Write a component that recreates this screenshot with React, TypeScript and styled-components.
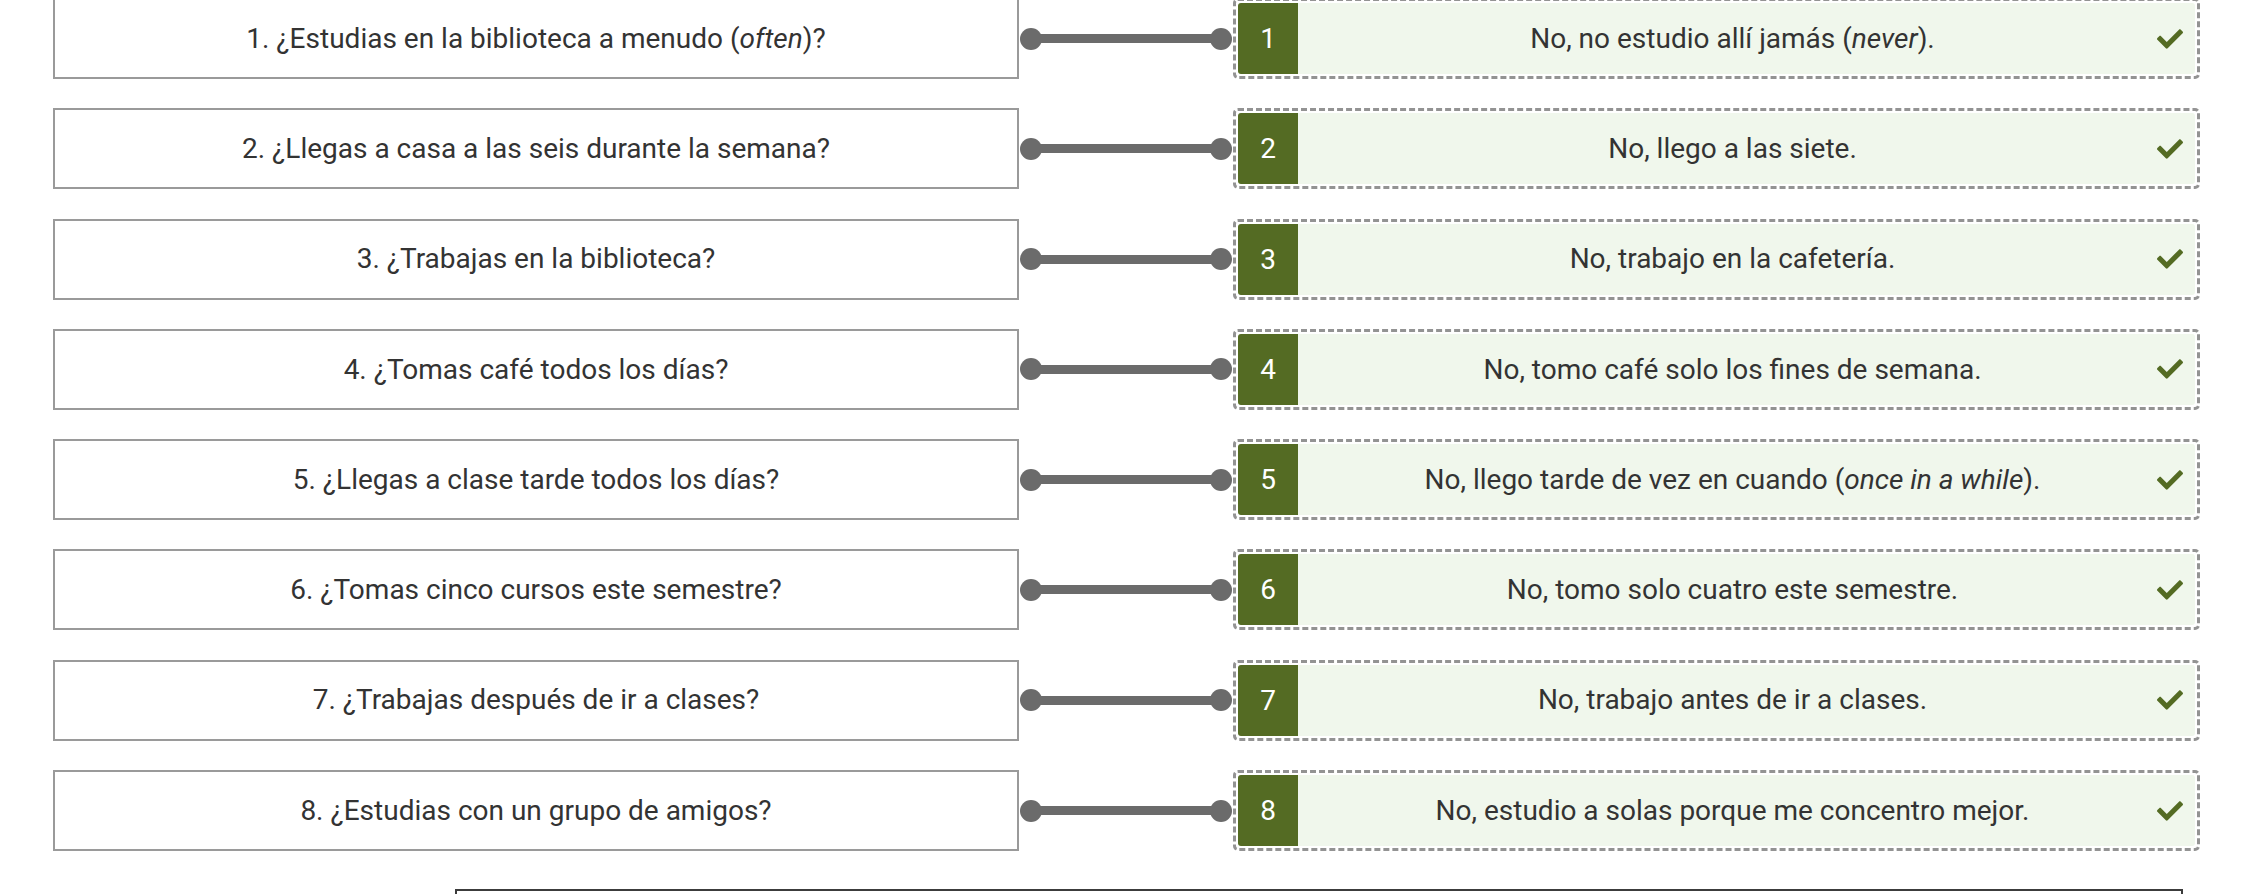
import React from "react";
import styled, { createGlobalStyle } from "styled-components";
import { FaCheck } from "react-icons/fa";

const GlobalStyle = createGlobalStyle`
  html, body {
    margin: 0;
    padding: 0;
    background: #ffffff;
    font-family: Roboto, "Liberation Sans", Arial, sans-serif;
    overflow: hidden;
  }
`;

const Page = styled.div`
  display: flex;
  flex-direction: column;
  gap: 29.3px;
  padding-left: 53px;
  margin-top: -2px;
`;

const Row = styled.div`
  display: grid;
  grid-template-columns: 966px 214px 967px;
  height: 81px;
`;

const Prompt = styled.div`
  box-sizing: border-box;
  border: 2px solid #9a9a9a;
  background: #ffffff;
  display: flex;
  align-items: center;
  justify-content: center;
  font-size: 28px;
  color: #333333;
  line-height: 1.2;
`;

const Connector = styled.div`
  display: flex;
  align-items: center;
  padding: 0 1px;
`;

const Dot = styled.span`
  width: 22px;
  height: 22px;
  border-radius: 50%;
  background: #6b6b6b;
  flex: none;
`;

const Line = styled.span`
  flex: 1;
  height: 9px;
  background: #6b6b6b;
  margin: 0 -2px;
`;

const AnswerFrame = styled.div`
  box-sizing: border-box;
  border: 3px dashed #939393;
  border-radius: 5px;
  padding: 2px;
  display: flex;
`;

const AnswerBody = styled.div`
  flex: 1;
  display: flex;
  align-items: center;
  background: #f0f7ec;
  border-radius: 3px;
`;

const Badge = styled.div`
  width: 60px;
  align-self: stretch;
  display: flex;
  align-items: center;
  justify-content: center;
  background: #546b23;
  color: #ffffff;
  font-size: 28px;
  border-radius: 3px 0 0 3px;
`;

const AnswerText = styled.div`
  flex: 1;
  text-align: center;
  padding-left: 10px;
  font-size: 28px;
  color: #333333;
  line-height: 1.2;
`;

const CheckMark = styled.span`
  display: flex;
  align-items: center;
  margin-right: 12px;
  color: #546b23;
`;

const BottomFrame = styled.div`
  margin-left: 402px;
  margin-top: 9px;
  width: 1728px;
  height: 40px;
  box-sizing: border-box;
  border: 2px solid #3c3c3c;
  border-bottom: none;
`;

type Item = { q: React.ReactNode; a: React.ReactNode };

const items: Item[] = [
  {
    q: (
      <>
        1. ¿Estudias en la biblioteca a menudo (<i>often</i>)?
      </>
    ),
    a: (
      <>
        No, no estudio allí jamás (<i>never</i>).
      </>
    ),
  },
  { q: "2. ¿Llegas a casa a las seis durante la semana?", a: "No, llego a las siete." },
  { q: "3. ¿Trabajas en la biblioteca?", a: "No, trabajo en la cafetería." },
  { q: "4. ¿Tomas café todos los días?", a: "No, tomo café solo los fines de semana." },
  {
    q: "5. ¿Llegas a clase tarde todos los días?",
    a: (
      <>
        No, llego tarde de vez en cuando (<i>once in a while</i>).
      </>
    ),
  },
  { q: "6. ¿Tomas cinco cursos este semestre?", a: "No, tomo solo cuatro este semestre." },
  { q: "7. ¿Trabajas después de ir a clases?", a: "No, trabajo antes de ir a clases." },
  { q: "8. ¿Estudias con un grupo de amigos?", a: "No, estudio a solas porque me concentro mejor." },
];

export default function App() {
  return (
    <>
      <GlobalStyle />
      <Page>
        {items.map((it, i) => (
          <Row key={i}>
            <Prompt>
              <span>{it.q}</span>
            </Prompt>
            <Connector>
              <Dot />
              <Line />
              <Dot />
            </Connector>
            <AnswerFrame>
              <AnswerBody>
                <Badge>{i + 1}</Badge>
                <AnswerText>{it.a}</AnswerText>
                <CheckMark>
                  <FaCheck size={26} />
                </CheckMark>
              </AnswerBody>
            </AnswerFrame>
          </Row>
        ))}
        <BottomFrame />
      </Page>
    </>
  );
}
